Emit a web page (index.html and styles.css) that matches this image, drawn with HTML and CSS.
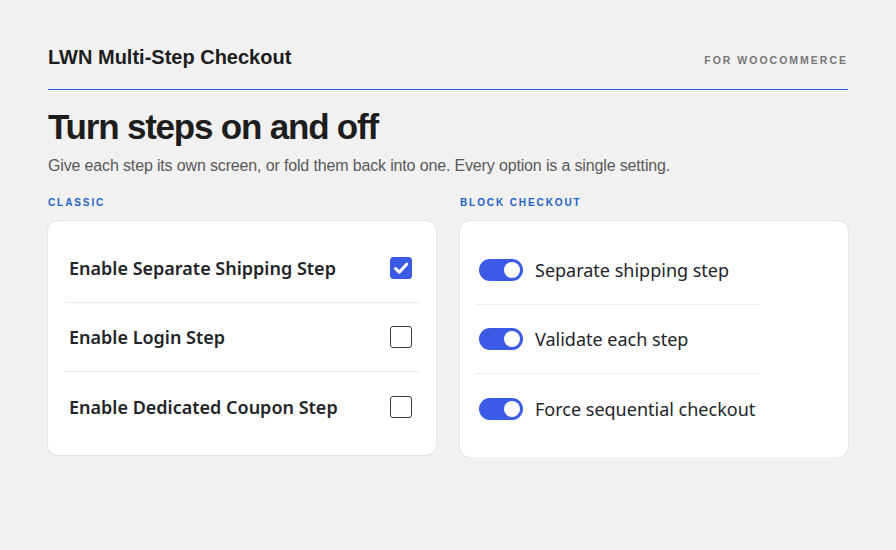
FILE: index.html
```html
<!DOCTYPE html>
<html lang="en">
<head>
    <meta charset="UTF-8">
    <meta name="viewport" content="width=device-width, initial-scale=1.0">
    <title>LWN Multi-Step Checkout</title>
    <link rel="stylesheet" href="styles.css">
</head>
<body>
    <div class="page">
        <header class="top-bar">
            <div class="brand">LWN Multi-Step Checkout</div>
            <div class="tagline">FOR WOOCOMMERCE</div>
        </header>

        <h1>Turn steps on and off</h1>
        <p class="intro">Give each step its own screen, or fold them back into one. Every option is a single setting.</p>

        <div class="columns">
            <!-- Classic checkout settings -->
            <section>
                <h2 class="label">CLASSIC</h2>
                <div class="card">
                    <div class="check-row">
                        <span>Enable Separate Shipping Step</span>
                        <span class="checkbox checked">
                            <svg viewBox="0 0 22 22" width="22" height="22"><path d="M5.6 11.6l3.7 3.7L16.6 7.2" fill="none" stroke="#fff" stroke-width="3" stroke-linecap="round" stroke-linejoin="round"/></svg>
                        </span>
                    </div>
                    <div class="check-row">
                        <span>Enable Login Step</span>
                        <span class="checkbox"></span>
                    </div>
                    <div class="check-row">
                        <span>Enable Dedicated Coupon Step</span>
                        <span class="checkbox"></span>
                    </div>
                </div>
            </section>

            <!-- Block checkout settings -->
            <section>
                <h2 class="label">BLOCK CHECKOUT</h2>
                <div class="card">
                    <div class="toggle-list">
                        <div class="toggle-row">
                            <span class="toggle"></span>
                            <span>Separate shipping step</span>
                        </div>
                        <div class="toggle-row">
                            <span class="toggle"></span>
                            <span>Validate each step</span>
                        </div>
                        <div class="toggle-row">
                            <span class="toggle"></span>
                            <span>Force sequential checkout</span>
                        </div>
                    </div>
                </div>
            </section>
        </div>
    </div>
</body>
</html>
```

FILE: styles.css
```css
/* Basic Reset */
* {
    margin: 0;
    padding: 0;
    box-sizing: border-box;
}

body {
    font-family: 'Liberation Sans', Arial, sans-serif;
    background-color: #f1f1f1;
    color: #1d1d1d;
}

.page {
    width: 800px;
    margin: 0 auto;
    padding-top: 46px;
}

/* Header */
.top-bar {
    display: flex;
    justify-content: space-between;
    align-items: center;
    padding-bottom: 20px;
    border-bottom: 1px solid #2563eb;
}

.brand {
    font-size: 20px;
    font-weight: bold;
    letter-spacing: 0;
}

.tagline {
    font-size: 10.5px;
    font-weight: bold;
    letter-spacing: 2px;
    color: #767676;
    padding-top: 5px;
}

h1 {
    font-size: 35px;
    font-weight: bold;
    letter-spacing: -1.2px;
    margin-top: 17px;
    line-height: 40px;
}

.intro {
    font-size: 16px;
    color: #595959;
    letter-spacing: -0.15px;
    margin-top: 10px;
}

/* Two columns */
.columns {
    display: grid;
    grid-template-columns: 388px 388px;
    gap: 24px;
    margin-top: 22px;
}

.label {
    font-size: 10px;
    font-weight: bold;
    letter-spacing: 1.9px;
    color: #2361c6;
    margin-bottom: 13px;
}

.card {
    background-color: white;
    border-radius: 10px;
    box-shadow: 0 0 0 1px #e6e6e6, 0 1px 2px rgba(0, 0, 0, 0.05);
    padding: 13px 16px 14px 17px;
    font-family: 'Noto Sans', sans-serif;
    color: #222428;
}

/* Classic rows */
.check-row {
    display: flex;
    justify-content: space-between;
    align-items: center;
    height: 69px;
    padding: 0 8px 0 4px;
    font-size: 18px;
    font-weight: 600;
    border-bottom: 1px solid #ececec;
}

.check-row:last-child {
    border-bottom: none;
}

.checkbox {
    width: 22px;
    height: 22px;
    border: 1.5px solid #3a3a3a;
    border-radius: 3px;
    display: flex;
}

.checkbox.checked {
    background-color: #3b5be6;
    border-color: #3b5be6;
}

.checkbox.checked svg {
    margin: -1.5px;
}

/* Block toggles */
.card .toggle-list {
    width: 284px;
    margin-top: 2px;
    margin-left: -1px;
}

.toggle-row {
    display: flex;
    align-items: center;
    gap: 12px;
    height: 69px;
    padding-left: 3px;
    font-size: 18px;
    border-bottom: 1px solid #ececec;
}

.toggle-row:last-child {
    border-bottom: none;
}

.toggle {
    width: 44px;
    height: 22px;
    border-radius: 11px;
    background-color: #3b5be6;
    position: relative;
    flex-shrink: 0;
}

.toggle::after {
    content: "";
    position: absolute;
    right: 3px;
    top: 3px;
    width: 16px;
    height: 16px;
    border-radius: 50%;
    background-color: white;
}
```
